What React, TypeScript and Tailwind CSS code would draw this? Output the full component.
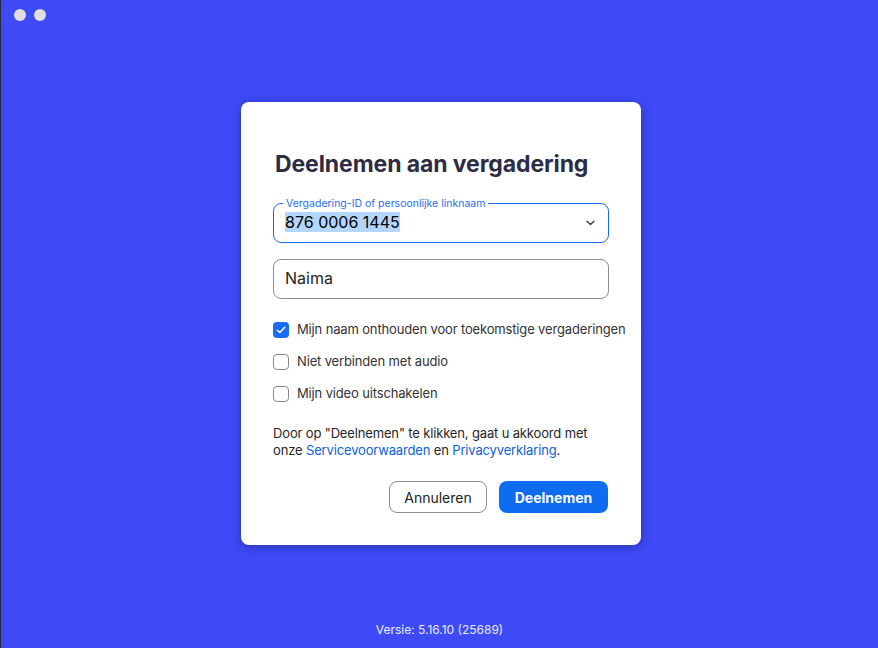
import React from "react";

function Checkbox({ checked }: { checked?: boolean }) {
  return checked ? (
    <div className="w-4 h-4 shrink-0 rounded-[4px] bg-[#1a6cf5] flex items-center justify-center">
      <svg width="10" height="8" viewBox="0 0 10 8" fill="none">
        <path d="M1.2 4.2 L3.8 6.6 L8.8 1.2" stroke="white" strokeWidth="1.4" strokeLinecap="round" strokeLinejoin="round" />
      </svg>
    </div>
  ) : (
    <div className="w-4 h-4 shrink-0 rounded-[4px] border border-[#8a8a8a] bg-white" />
  );
}

export default function App() {
  return (
    <div
      className="w-[878px] h-[648px] bg-[#3d4af6] border-l border-[#2a2a44] flex flex-col"
      style={{ fontFamily: "Inter, 'Noto Sans', sans-serif" }}
    >
      <div className="h-[30px] flex items-start gap-2 pl-[13px] pt-[9px]">
        <div className="w-3 h-3 rounded-full bg-[#dedede]" />
        <div className="w-3 h-3 rounded-full bg-[#dedede]" />
      </div>
      <div className="ml-[240px] mt-[72px] w-[400px] h-[443px] bg-white rounded-[8px] shadow-[0_2px_10px_rgba(0,0,0,0.3)] px-8 pt-[48px] flex flex-col">
        <h1 className="text-[23px] leading-[28px] font-bold text-[#2c2c46] pl-[2px] tracking-[-0.1px]">
          Deelnemen aan vergadering
        </h1>
        <div className="relative mt-[25px] h-10 rounded-[8px] border border-[#1a6cf5] flex items-center pl-[11px] pr-[13px]">
          <span className="absolute -top-[7px] left-[9px] bg-white px-[3px] text-[10.5px] leading-[13px] text-[#2c6ef2]">
            Vergadering-ID of persoonlijke linknaam
          </span>
          <span className="text-[16px] leading-[20px] text-black bg-[#b4d6fd] -mt-[2px]">876 0006 1445</span>
          <svg className="ml-auto" width="9" height="6" viewBox="0 0 9 6" fill="none">
            <path d="M1 1.3 L4.5 4.5 L8 1.3" stroke="#444" strokeWidth="1.5" strokeLinecap="round" strokeLinejoin="round" />
          </svg>
        </div>
        <div className="mt-4 h-10 rounded-[8px] border border-[#8c8c8c] flex items-center pl-[11px]">
          <span className="text-[16px] leading-[20px] text-[#222] -mt-[2px]">Naima</span>
        </div>
        <div className="mt-[23px] flex flex-col gap-4">
          <div className="flex items-center gap-2 h-4">
            <Checkbox checked />
            <span className="text-[13px] text-[#333] whitespace-nowrap tracking-[-0.15px]">
              Mijn naam onthouden voor toekomstige vergaderingen
            </span>
          </div>
          <div className="flex items-center gap-2 h-4">
            <Checkbox />
            <span className="text-[13px] text-[#333] whitespace-nowrap tracking-[-0.15px]">Niet verbinden met audio</span>
          </div>
          <div className="flex items-center gap-2 h-4">
            <Checkbox />
            <span className="text-[13px] text-[#333] whitespace-nowrap tracking-[-0.15px]">Mijn video uitschakelen</span>
          </div>
        </div>
        <p className="mt-[23px] text-[13px] leading-[17px] text-[#262626] tracking-[-0.15px]">
          Door op "Deelnemen" te klikken, gaat u akkoord met
          <br />
          onze <span className="text-[#0e62d9]">Servicevoorwaarden</span> en{" "}
          <span className="text-[#0e62d9]">Privacyverklaring</span>.
        </p>
        <div className="mt-[22px] flex justify-end gap-3 pr-[1px]">
          <button className="w-[98px] h-8 rounded-[8px] border border-[#8c8c8c] text-[14px] text-[#222] bg-white">
            Annuleren
          </button>
          <button className="w-[109px] h-8 rounded-[8px] bg-[#0e6cf0] text-[14px] font-bold text-white">
            Deelnemen
          </button>
        </div>
      </div>
      <div className="mt-auto pb-[10px] text-center text-[12px] leading-[16px] text-[#ececff]">
        Versie: 5.16.10 (25689)
      </div>
    </div>
  );
}
